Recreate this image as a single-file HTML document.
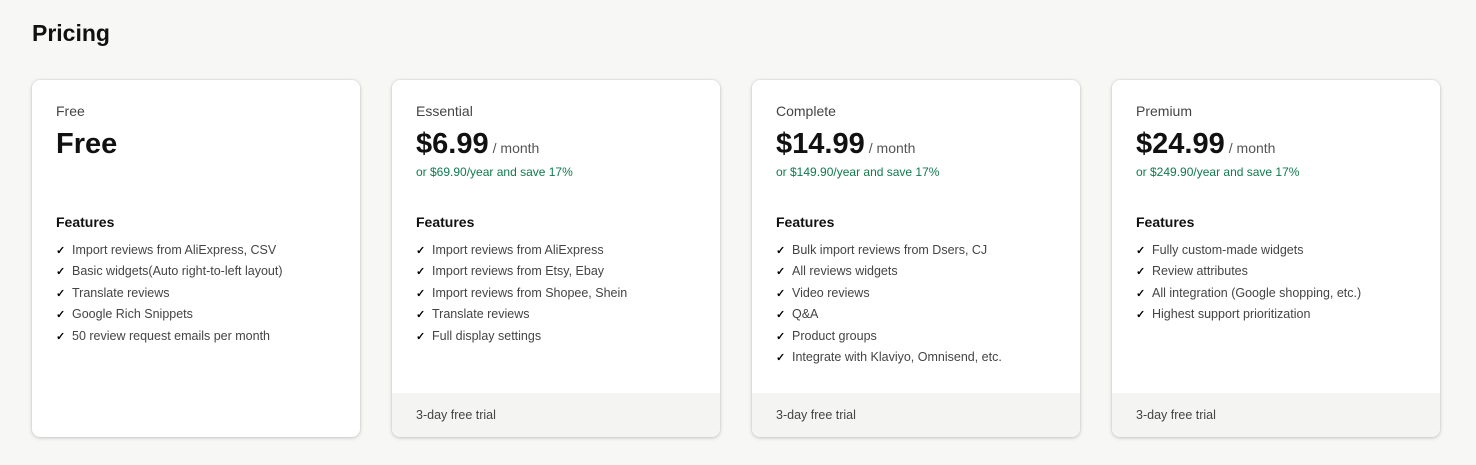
<!DOCTYPE html><html><head><style>
body{margin:0;width:1476px;height:465px;background:#f7f7f6;font-family:"Liberation Sans",sans-serif;overflow:hidden;position:relative}
h1{position:absolute;left:32px;top:20px;margin:0;font-size:23px;font-weight:bold;color:#111}
.card{position:absolute;top:80px;width:328px;height:357px;background:#fff;border-radius:8px;box-shadow:0 1px 4px rgba(0,0,0,.18),0 0 0 1px rgba(0,0,0,.04);overflow:hidden}
.lab{position:absolute;left:24px;top:23px;font-size:14px;color:#444}
.price{position:absolute;left:24px;top:48px;font-size:29px;font-weight:bold;color:#111}
.price span{font-size:14px;font-weight:normal;color:#555;margin-left:-4px}
.save{position:absolute;left:24px;top:85px;font-size:12px;color:#0f7a4c}
.feat{position:absolute;left:24px;top:134px;font-size:14px;font-weight:bold;color:#111}
ul{position:absolute;left:24px;top:163px;margin:0;padding:0;list-style:none;font-size:12.5px;color:#444}
li{height:21.4px}
li:before{content:"✓";color:#000;font-size:11px;font-weight:bold;display:inline-block;width:16px}
.foot{position:absolute;left:0;bottom:0;width:100%;height:44px;background:#f4f4f3;font-size:12.5px;color:#444;line-height:44px;padding-left:24px;box-sizing:border-box}
</style></head><body>
<h1>Pricing</h1>
<div class="card" style="left:32px"><div class="lab">Free</div><div class="price">Free</div><div class="feat">Features</div>
<ul><li>Import reviews from AliExpress, CSV</li><li>Basic widgets(Auto right-to-left layout)</li><li>Translate reviews</li><li>Google Rich Snippets</li><li>50 review request emails per month</li></ul></div>
<div class="card" style="left:392px"><div class="lab">Essential</div><div class="price">$6.99 <span>/ month</span></div><div class="save">or $69.90/year and save 17%</div><div class="feat">Features</div>
<ul><li>Import reviews from AliExpress</li><li>Import reviews from Etsy, Ebay</li><li>Import reviews from Shopee, Shein</li><li>Translate reviews</li><li>Full display settings</li></ul><div class="foot">3-day free trial</div></div>
<div class="card" style="left:752px"><div class="lab">Complete</div><div class="price">$14.99 <span>/ month</span></div><div class="save">or $149.90/year and save 17%</div><div class="feat">Features</div>
<ul><li>Bulk import reviews from Dsers, CJ</li><li>All reviews widgets</li><li>Video reviews</li><li>Q&amp;A</li><li>Product groups</li><li>Integrate with Klaviyo, Omnisend, etc.</li></ul><div class="foot">3-day free trial</div></div>
<div class="card" style="left:1112px"><div class="lab">Premium</div><div class="price">$24.99 <span>/ month</span></div><div class="save">or $249.90/year and save 17%</div><div class="feat">Features</div>
<ul><li>Fully custom-made widgets</li><li>Review attributes</li><li>All integration (Google shopping, etc.)</li><li>Highest support prioritization</li></ul><div class="foot">3-day free trial</div></div>
</body></html>
